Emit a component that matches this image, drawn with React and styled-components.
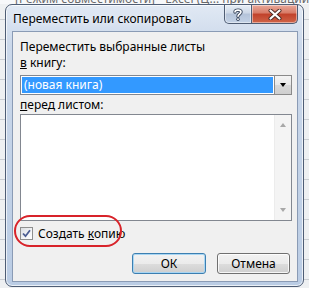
import styled, { createGlobalStyle } from "styled-components";

const GlobalStyle = createGlobalStyle`
  html, body { margin: 0; padding: 0; }
  body { font-family: "Noto Sans", "Open Sans", sans-serif; }
  * { box-sizing: border-box; }
`;

const Desktop = styled.div`
  width: 309px;
  height: 288px;
  overflow: hidden;
  display: flex;
  flex-direction: column;
  background: #eef0f2
    repeating-linear-gradient(to bottom, transparent 0 19px, #c9cdd2 19px 20px);
`;

const ExcelCaption = styled.div`
  height: 4px;
  overflow: hidden;
  padding-left: 15px;
  background: #f7f8fa;
  color: #6a6a6a;
  font-size: 12px;
  line-height: 12px;
  white-space: nowrap;

  & span {
    display: block;
    margin-top: -7px;
  }
`;

const Window = styled.div`
  margin-left: 5px;
  width: 299px;
  height: 283px;
  display: flex;
  flex-direction: column;
  padding: 0 5px 4px 6px;
  border: 1px solid #4e5d75;
  border-radius: 7px;
  background: linear-gradient(to bottom, #e1e9f4 0, #cbd8ea 40px, #bacce4 100%);
  box-shadow: inset 0 0 0 1px rgba(255, 255, 255, 0.7);
`;

const TitleBar = styled.div`
  height: 26px;
  display: flex;
  justify-content: space-between;
  align-items: flex-start;
`;

const Title = styled.div`
  padding: 6px 0 0 1px;
  font-size: 12px;
  line-height: 16px;
  color: #000;
  text-shadow: 0 0 6px rgba(255, 255, 255, 0.9);
`;

const Controls = styled.div`
  display: flex;
`;

const CaptionButton = styled.div`
  width: ${(p) => p.$width}px;
  height: 19px;
  display: flex;
  align-items: center;
  justify-content: center;
  border: 1px solid #4f5d74;
  border-top: none;
  border-radius: ${(p) => (p.$close ? "0 0 5px 0" : "0 0 0 5px")};
  border-left: ${(p) => (p.$close ? "none" : "1px solid #4f5d74")};
  background: ${(p) =>
    p.$close
      ? "linear-gradient(to bottom, #e9a99a 0, #d77a66 45%, #c1412a 50%, #cf6448 100%)"
      : "linear-gradient(to bottom, #e8eef6 0, #ccd7e6 45%, #b4c3d9 50%, #c3d2e6 100%)"};
  box-shadow: inset 0 0 0 1px rgba(255, 255, 255, 0.45);
`;

const Client = styled.div`
  flex: 1;
  display: flex;
  flex-direction: column;
  padding: 7px 5px 0 7px;
  background: #f0f0f0;
  border: 1px solid #8a9bb5;
`;

const Label = styled.div`
  font-size: 12px;
  line-height: 16px;
  color: #000;
  margin-top: ${(p) => p.$gap || 0}px;
`;

const Combo = styled.div`
  margin-top: 4px;
  height: 20px;
  display: flex;
  padding: 1px;
  border: 1px solid #828790;
  background: #fff;
`;

const Selected = styled.div`
  flex: 1;
  padding-left: 2px;
  background: #3399ff;
  color: #fff;
  font-size: 12px;
  line-height: 16px;
`;

const DropButton = styled.div`
  width: 18px;
  margin: -2px -2px -2px 1px;
  display: flex;
  align-items: center;
  justify-content: center;
  border: 1px solid #8a8a8a;
  background: linear-gradient(to bottom, #f4f4f4 0, #e8e8e8 50%, #d8d8d8 51%, #cfcfcf 100%);
`;

const Triangle = styled.div`
  width: 0;
  height: 0;
  border-left: 3.5px solid transparent;
  border-right: 3.5px solid transparent;
  border-${(p) => (p.$up ? "bottom" : "top")}: 4px solid ${(p) => p.$color};
`;

const ListBox = styled.div`
  margin-top: 1px;
  height: 107px;
  display: flex;
  justify-content: flex-end;
  border: 1px solid #828790;
  background: #fff;
`;

const ScrollTrack = styled.div`
  width: 17px;
  display: flex;
  flex-direction: column;
  justify-content: space-between;
  align-items: center;
  padding: 8px 0 8px;
  background: #f4f4f4;
  border-left: 1px solid #ececec;
`;

const CheckRow = styled.label`
  position: relative;
  margin-top: 4px;
  height: 16px;
  display: flex;
  align-items: center;
  gap: 5px;
  font-size: 12px;
  color: #000;
`;

const CheckBox = styled.div`
  width: 13px;
  height: 13px;
  display: flex;
  align-items: center;
  justify-content: center;
  border: 1px solid #8e8f8f;
  background: linear-gradient(135deg, #dadde2 0, #f4f5f7 60%, #ffffff 100%);
`;

const Highlight = styled.div`
  position: absolute;
  left: -6px;
  top: -10px;
  width: 108px;
  height: 32px;
  border: 2.5px solid #d8232a;
  border-radius: 16px;
  pointer-events: none;
`;

const ButtonRow = styled.div`
  margin-top: 12px;
  display: flex;
  justify-content: flex-end;
  gap: 11px;
  padding-right: 2px;
`;

const Button = styled.div`
  width: ${(p) => p.$width}px;
  height: 21px;
  display: flex;
  align-items: center;
  justify-content: center;
  font-size: 12px;
  color: #000;
  border: 1px solid ${(p) => (p.$default ? "#3c7fb1" : "#707070")};
  border-radius: 3px;
  background: linear-gradient(to bottom, #f2f2f2 0, #ebebeb 50%, #dddddd 51%, #cfcfcf 100%);
  box-shadow: inset 0 0 0 1px ${(p) => (p.$default ? "#a9d6f3" : "rgba(255,255,255,0.8)")};
`;

function HelpGlyph() {
  return (
    <svg width="10" height="13" viewBox="0 0 10 13">
      <path
        d="M2 4 C2 1.5 8 1.5 8 4 C8 6 5 6 5 8.2"
        fill="none"
        stroke="#37445a"
        strokeWidth="3.4"
        strokeLinecap="round"
      />
      <circle cx="5" cy="11.2" r="1.7" fill="#37445a" />
      <path
        d="M2 4 C2 1.5 8 1.5 8 4 C8 6 5 6 5 8.2"
        fill="none"
        stroke="#fff"
        strokeWidth="1.6"
        strokeLinecap="round"
      />
      <circle cx="5" cy="11.2" r="0.9" fill="#fff" />
    </svg>
  );
}

function CloseGlyph() {
  return (
    <svg width="14" height="11" viewBox="0 0 14 11">
      <path d="M2.5 1.5 L11.5 9.5 M11.5 1.5 L2.5 9.5" stroke="#4a2a24" strokeWidth="4" strokeLinecap="round" />
      <path d="M2.5 1.5 L11.5 9.5 M11.5 1.5 L2.5 9.5" stroke="#fff" strokeWidth="2.2" strokeLinecap="round" />
    </svg>
  );
}

export default function App() {
  return (
    <>
      <GlobalStyle />
      <Desktop>
        <ExcelCaption>
          <span>[Режим совместимости] - Excel (Ц... при активации продукта)</span>
        </ExcelCaption>
        <Window>
          <TitleBar>
            <Title>Переместить или скопировать</Title>
            <Controls>
              <CaptionButton $width={28}>
                <HelpGlyph />
              </CaptionButton>
              <CaptionButton $width={46} $close>
                <CloseGlyph />
              </CaptionButton>
            </Controls>
          </TitleBar>
          <Client>
            <Label>Переместить выбранные листы</Label>
            <Label>
              <u>в</u> книгу:
            </Label>
            <Combo>
              <Selected>(новая книга)</Selected>
              <DropButton>
                <Triangle $color="#000" />
              </DropButton>
            </Combo>
            <Label $gap={2}>
              <u>п</u>еред листом:
            </Label>
            <ListBox>
              <ScrollTrack>
                <Triangle $up $color="#a8a8a8" />
                <Triangle $color="#a8a8a8" />
              </ScrollTrack>
            </ListBox>
            <CheckRow>
              <CheckBox>
                <svg width="9" height="9" viewBox="0 0 9 9">
                  <path d="M1 4.5 L3.5 7.2 L8 1.2" fill="none" stroke="#4b5d92" strokeWidth="1.8" />
                </svg>
              </CheckBox>
              <span>
                Создать <u>к</u>опию
              </span>
              <Highlight />
            </CheckRow>
            <ButtonRow>
              <Button $width={74} $default>
                ОК
              </Button>
              <Button $width={73}>Отмена</Button>
            </ButtonRow>
          </Client>
        </Window>
      </Desktop>
    </>
  );
}
